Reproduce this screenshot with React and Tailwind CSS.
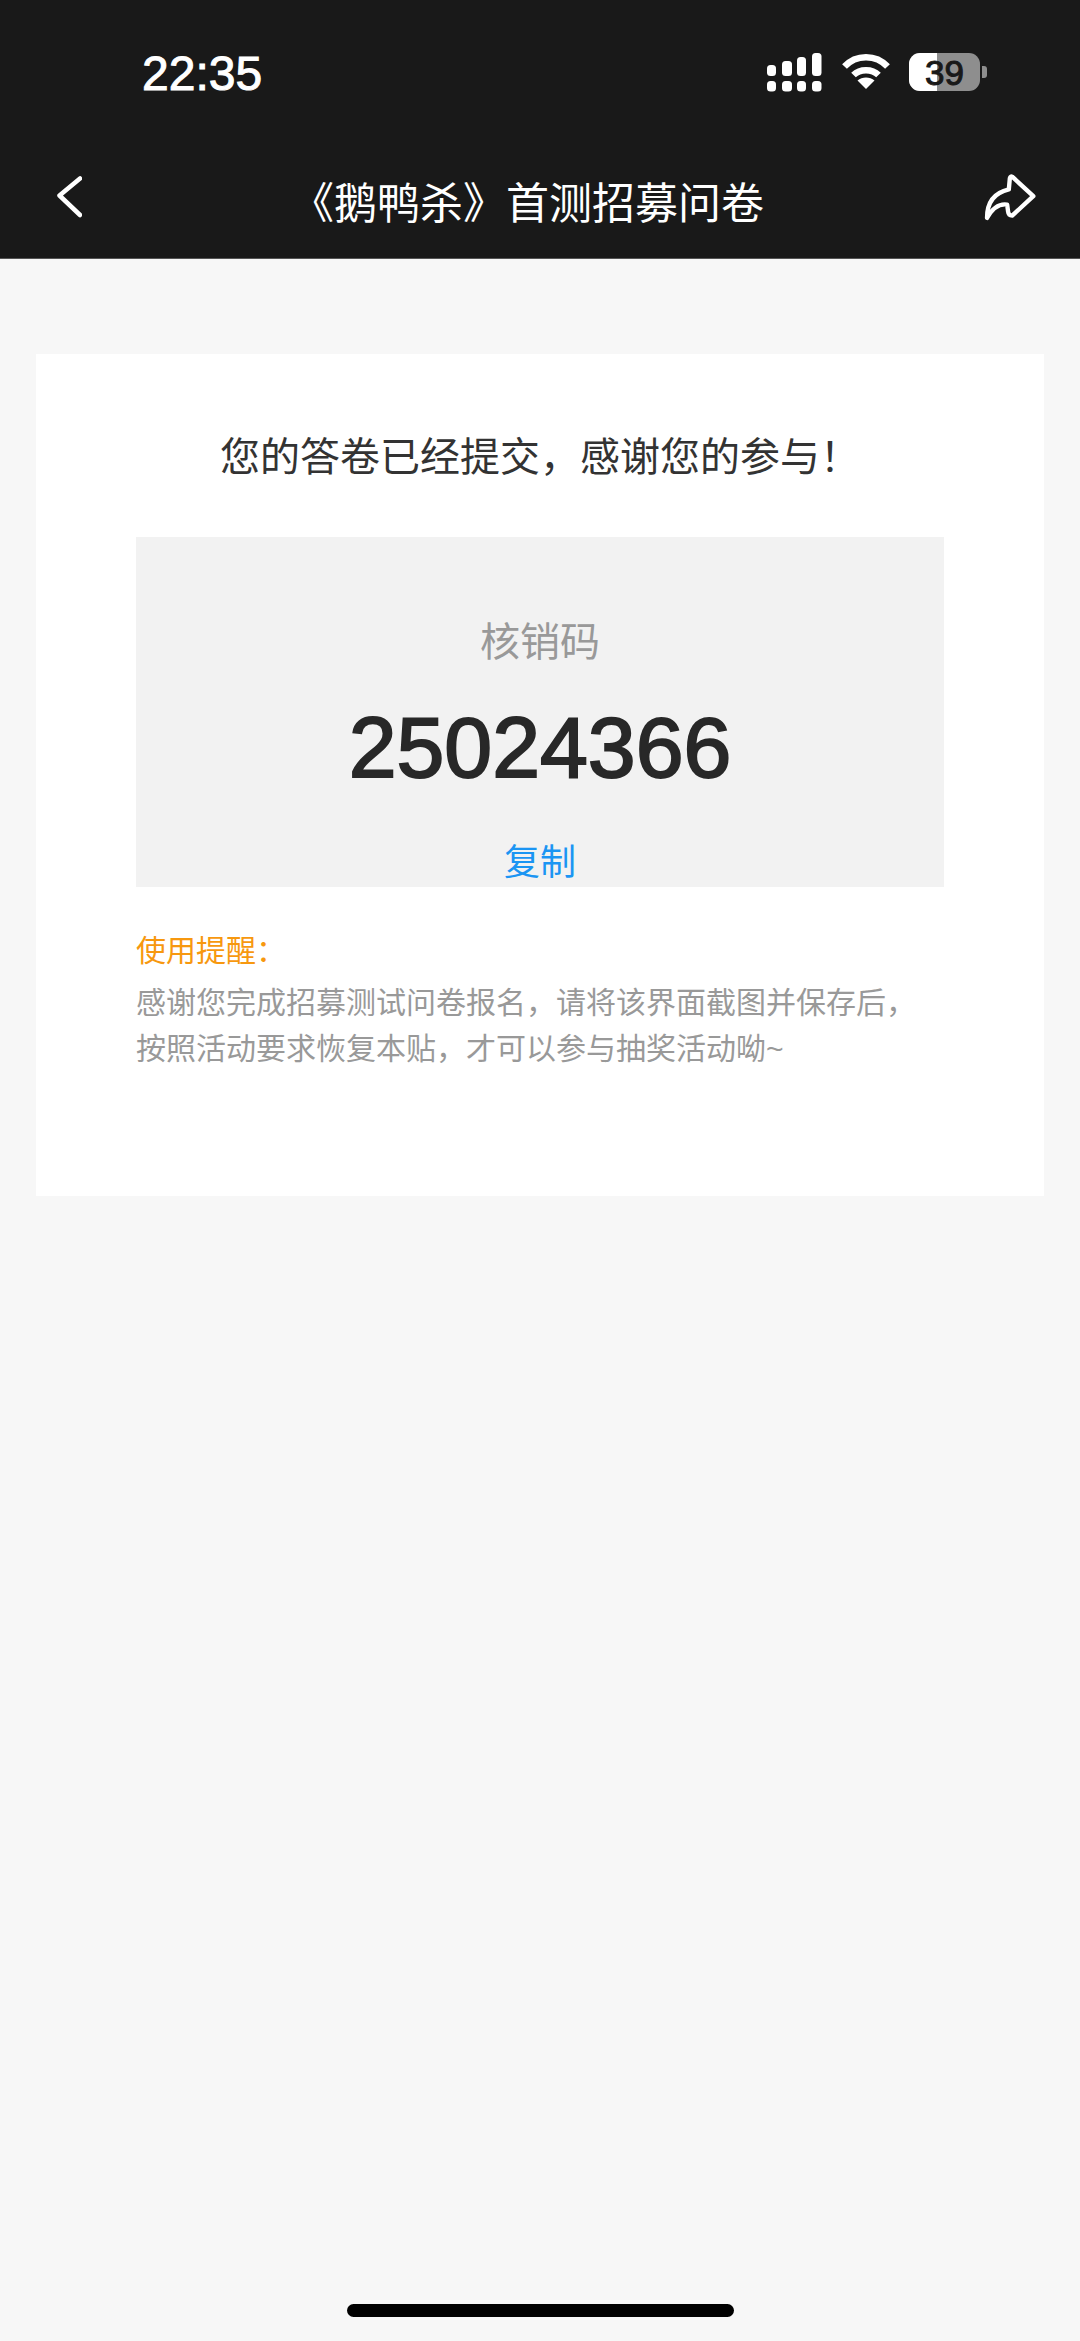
import React from "react";

const cjk = "font-['Liberation_Sans','Noto_Sans_CJK_SC',sans-serif]";

const SignalIcon = () => (
  <svg width="56" height="39" viewBox="0 0 56 39" fill="white">
    {/* top row grows, bottom row stays the same */}
    <rect x="0" y="12" width="9" height="11" rx="3.5" />
    <rect x="15" y="8" width="10" height="15" rx="3.5" />
    <rect x="30" y="4" width="9" height="19" rx="3.5" />
    <rect x="45" y="0" width="9.5" height="23" rx="3.5" />
    <rect x="0" y="28" width="9" height="10.5" rx="3.5" />
    <rect x="15" y="28" width="10" height="10.5" rx="3.5" />
    <rect x="30" y="28" width="9" height="10.5" rx="3.5" />
    <rect x="45" y="28" width="9.5" height="10.5" rx="3.5" />
  </svg>
);

const WifiIcon = () => (
  <svg width="48" height="36" viewBox="0 0 48 36" fill="none" stroke="white" strokeWidth="6.5" strokeLinecap="butt">
    <path d="M2.5 13.5 C14 1 34 1 45.5 13.5" />
    <path d="M11.5 22 C18 15.5 30 15.5 36.5 22" />
    <path d="M24 36 L15.5 27.5 C20 23.5 28 23.5 32.5 27.5 Z" fill="white" stroke="none" />
  </svg>
);

const Battery = () => (
  <div className="flex items-center gap-[2px]">
    <div className="relative w-[71px] h-[38px] rounded-[11px] overflow-hidden bg-[#8e8e8e] flex items-center justify-center">
      <div className="absolute left-0 top-0 bottom-0 w-[28px] bg-white" />
      <span className="relative font-['Liberation_Sans',sans-serif] text-[35px] leading-none text-[#191919] [-webkit-text-stroke:1px_#191919]">39</span>
    </div>
    <div className="w-[5px] h-[12px] rounded-r-[3px] bg-[#8e8e8e]" />
  </div>
);

const BackIcon = () => (
  <svg width="26" height="42" viewBox="0 0 26 42" fill="none" stroke="white" strokeWidth="4.5" strokeLinecap="round" strokeLinejoin="round">
    <path d="M24 2.5 L3.5 19.5 L24 39" />
  </svg>
);

const ShareIcon = () => (
  <svg width="57" height="52" viewBox="785 420 170 155" fill="none" stroke="white" strokeWidth="13" strokeLinecap="round" strokeLinejoin="round">
    <path d="M875 437 L938 495 L875 553 Q864 553 863 542 L860 520 Q825 515 800 560 Q800 490 865 475 L868 442 Q870 435 875 437 Z" />
  </svg>
);

const App = () => {
  return (
    <div className={`min-h-[2341px] bg-[#f7f7f7] ${cjk}`}>
      {/* Header */}
      <header className="bg-[#191919] h-[259px] border-b border-b-[#555555] flex flex-col">
        <div className="flex items-start justify-between pl-[142px] pr-[93px] pt-[53px]">
          <span className="font-['Liberation_Sans',sans-serif] text-[48px] leading-[42px] text-white [-webkit-text-stroke:1px_white]">22:35</span>
          <div className="flex items-start gap-[19px]">
            <SignalIcon />
            <WifiIcon />
            <Battery />
          </div>
        </div>
        <div className="flex items-center justify-between pl-[56px] pr-[41px] mt-[72px]">
          <BackIcon />
          <h1 className="text-[43px] leading-[60px] text-white translate-y-[7px] mr-[9px]">《鹅鸭杀》首测招募问卷</h1>
          <ShareIcon />
        </div>
      </header>

      {/* Konten */}
      <main className="pt-[95px] px-[36px]">
        <section className="bg-white h-[842px] px-[100px] pt-[79px]">
          <p className="text-center text-[40px] leading-[48px] text-[#333333]">您的答卷已经提交，感谢您的参与！</p>

          <div className="mt-[56px] bg-[#f2f2f2] h-[350px] flex flex-col items-center pt-[77px]">
            <span className="text-[40px] leading-[56px] text-[#999999]">核销码</span>
            <span className="mt-[27px] text-[86px] leading-[100px] text-[#282828] [-webkit-text-stroke:2px_#282828]">25024366</span>
            <span className="mt-[41px] text-[36px] leading-[50px] text-[#1b95f3]">复制</span>
          </div>

          <p className="mt-[42px] text-[30px] leading-[44px] text-[#f7980f]">使用提醒：</p>
          <p className="mt-[7px] text-[30px] leading-[46px] text-[#999999]">
            感谢您完成招募测试问卷报名，请将该界面截图并保存后，
            <br />
            按照活动要求恢复本贴，才可以参与抽奖活动呦~
          </p>
        </section>
      </main>

      {/* Home indicator */}
      <div className="fixed left-[347px] top-[2304px] w-[387px] h-[13px] rounded-full bg-black" />
    </div>
  );
};

export default App;
